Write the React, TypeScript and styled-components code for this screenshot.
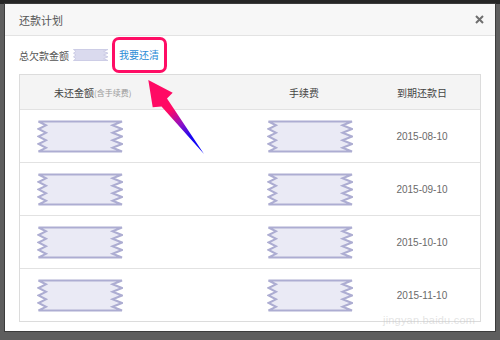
import React from "react";
import styled, { createGlobalStyle } from "styled-components";

const Global = createGlobalStyle`
  html, body { margin: 0; padding: 0; }
  body {
    width: 500px; height: 340px; overflow: hidden;
    background: linear-gradient(#262626 0 4px, #5e5e5e 4px);
    font-family: "Noto Sans CJK SC", "Liberation Sans", sans-serif;
  }
`;

const Page = styled.div`
  position: relative;
  width: 500px;
  height: 340px;
  padding: 4px 5px 0 5px;
  box-sizing: border-box;
`;

const Dialog = styled.div`
  width: 490px;
  height: 327px;
  background: #fff;
  box-shadow: 0 0 0 1px #3c3c3c;
  display: flex;
  flex-direction: column;
`;

const Header = styled.div`
  height: 31px;
  background: #f7f7f7;
  border-bottom: 1px solid #e3e3e3;
  display: flex;
  align-items: center;
  justify-content: space-between;
  padding: 0 11px 0 14px;
`;

const Title = styled.span`
  font-size: 11px;
  color: #555;
`;

const Close = styled.svg`
  width: 9px;
  height: 9px;
`;

const Body = styled.div`
  padding: 0 14px;
`;

const Summary = styled.div`
  height: 38px;
  display: flex;
  align-items: center;
  gap: 3px;
  font-size: 10px;
  color: #555;
`;

const Highlight = styled.span`
  border: 3px solid #ff0d65;
  border-radius: 7px;
  padding: 8px 5px 9px 4px;
  line-height: 13px;
  color: #2b8bd6;
  font-size: 10px;
`;

const Table = styled.div`
  width: 462px;
  box-sizing: border-box;
  border: 1px solid #dcdcdc;
`;

const Row = styled.div<{ $head?: boolean }>`
  display: grid;
  grid-template-columns: 224px 120px 1fr;
  height: ${(p) => (p.$head ? 34 : 52)}px;
  background: ${(p) => (p.$head ? "#f4f4f4" : "#fff")};
  &:not(:last-child) { border-bottom: 1px solid #e2e2e2; }
`;

const Cell = styled.div<{ $pl?: number; $center?: boolean }>`
  display: flex;
  align-items: center;
  justify-content: ${(p) => (p.$center ? "center" : "flex-start")};
  padding-left: ${(p) => p.$pl ?? 0}px;
`;

const HeadText = styled.span`
  font-size: 10px;
  color: #444;
`;

const Note = styled.span`
  font-size: 8px;
  color: #999;
`;

const DateText = styled.span`
  font-family: "Liberation Sans", sans-serif;
  font-size: 10px;
  color: #6a6a6a;
  padding-top: 1px;
`;

const Watermark = styled.div`
  position: absolute;
  left: 383px;
  top: 314px;
  font-family: "Liberation Sans", sans-serif;
  font-size: 11px;
  color: rgba(200, 200, 200, 0.5);
  letter-spacing: 0.2px;
`;

const ArrowSvg = styled.svg`
  position: absolute;
  left: 140px;
  top: 75px;
  width: 70px;
  height: 85px;
`;

const MaskSvg = styled.svg`
  display: block;
`;

function Mask({ w, h, small }: { w: number; h: number; small?: boolean }) {
  const t = 1.5;
  const b = h - 1.5;
  const teeth = small ? 3 : 4;
  const amp = small ? 4 : 9;
  const left: string[] = [];
  const right: string[] = [];
  for (let i = 0; i <= teeth * 2; i++) {
    const y = t + ((b - t) * i) / (teeth * 2);
    const inL = i % 2 === 1;
    left.push(`${inL ? amp : 1.5},${y.toFixed(1)}`);
    right.push(`${inL ? w - amp - 1.5 : w - 1},${y.toFixed(1)}`);
  }
  const pts = [...right, ...left.reverse()].join(" ");
  return (
    <MaskSvg width={w} height={h} viewBox={`0 0 ${w} ${h}`}>
      <polygon
        points={pts}
        fill={small ? "#dadaee" : "#eaeaf5"}
        stroke={small ? "#cdcde6" : "#adadd2"}
        strokeWidth={small ? 1 : 2}
        strokeLinejoin="miter"
      />
    </MaskSvg>
  );
}

const rows = ["2015-08-10", "2015-09-10", "2015-10-10", "2015-11-10"];

export default function App() {
  return (
    <>
      <Global />
      <Page>
        <Dialog>
          <Header>
            <Title>还款计划</Title>
            <Close viewBox="0 0 9 9">
              <path d="M1 1 L8 8 M8 1 L1 8" stroke="#6f6f6f" strokeWidth="2" />
            </Close>
          </Header>
          <Body>
            <Summary>
              <span>总欠款金额</span>
              <Mask w={37} h={14} small />
              <Highlight>我要还清</Highlight>
            </Summary>
            <Table>
              <Row $head>
                <Cell $pl={34}>
                  <HeadText>未还金额</HeadText>
                  <Note>(含手续费)</Note>
                </Cell>
                <Cell $pl={45}>
                  <HeadText>手续费</HeadText>
                </Cell>
                <Cell $center>
                  <HeadText>到期还款日</HeadText>
                </Cell>
              </Row>
              {rows.map((d) => (
                <Row key={d}>
                  <Cell $pl={17}>
                    <Mask w={86} h={33} />
                  </Cell>
                  <Cell $pl={23}>
                    <Mask w={86} h={33} />
                  </Cell>
                  <Cell $center>
                    <DateText>{d}</DateText>
                  </Cell>
                </Row>
              ))}
            </Table>
          </Body>
        </Dialog>
        <Watermark>jingyan.baidu.com</Watermark>
        <ArrowSvg viewBox="140 75 70 85">
          <defs>
            <linearGradient id="ag" x1="160" y1="95" x2="204" y2="154" gradientUnits="userSpaceOnUse">
              <stop offset="0" stopColor="#ff0a64" />
              <stop offset="0.25" stopColor="#ff0a64" />
              <stop offset="0.5" stopColor="#8a10c8" />
              <stop offset="0.7" stopColor="#1a08f0" />
              <stop offset="1" stopColor="#0000ff" />
            </linearGradient>
          </defs>
          <polygon
            points="148.3,80 172.7,92.7 167,98.5 204,154 161.5,106.5 152.7,107.3"
            fill="url(#ag)"
          />
        </ArrowSvg>
      </Page>
    </>
  );
}
